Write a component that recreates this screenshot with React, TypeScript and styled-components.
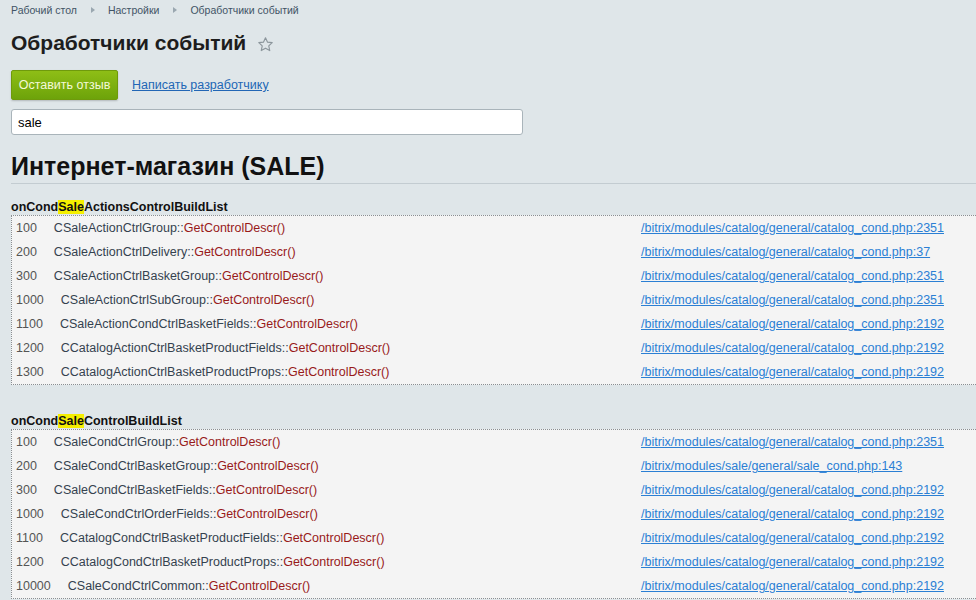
import React from 'react'
import styled, { createGlobalStyle } from 'styled-components'

const GlobalStyle = createGlobalStyle`
  html, body {
    margin: 0;
    padding: 0;
  }
  body {
    background: #dfe6e9;
    font-family: 'Liberation Sans', Arial, sans-serif;
    overflow: hidden;
  }
`

const Page = styled.div`
  padding: 2px 0 0 11px;
  width: 976px;
  box-sizing: border-box;
`

const Breadcrumbs = styled.div`
  display: flex;
  align-items: center;
  height: 16px;
  font-size: 10.5px;
  color: #3f5466;
`

const Crumb = styled.span``

const CrumbArrow = styled.span`
  width: 0;
  height: 0;
  border-top: 3px solid transparent;
  border-bottom: 3px solid transparent;
  border-left: 4px solid #9aa7b0;
  margin: 0 13px 0 14px;
`

const TitleRow = styled.div`
  display: flex;
  align-items: center;
  margin-top: 11px;
  height: 28px;
`

const Title = styled.h1`
  margin: 0;
  font-size: 21px;
  font-weight: bold;
  color: #1d1d1d;
`

const Star = styled.svg`
  margin-left: 11px;
  margin-top: 2px;
`

const Actions = styled.div`
  display: flex;
  align-items: center;
  margin-top: 13px;
  gap: 14px;
`

const Button = styled.button`
  height: 30px;
  width: 107px;
  padding: 0;
  border: 1px solid #6f9a0c;
  border-radius: 2px;
  background: linear-gradient(#8ebe16, #6da30a);
  color: #f4f9d8;
  font-family: inherit;
  font-size: 12.5px;
  box-shadow: 0 1px 2px rgba(0, 0, 0, 0.2);
`

const DevLink = styled.a`
  font-size: 12.5px;
  color: #2266b5;
  text-decoration: underline;
`

const Search = styled.input`
  display: block;
  margin-top: 9px;
  width: 512px;
  height: 26px;
  box-sizing: border-box;
  border: 1px solid #a9b4ba;
  border-radius: 3px;
  background: #fff;
  padding: 0 6px;
  font-family: inherit;
  font-size: 13px;
  color: #000;
  outline: none;
`

const ModuleTitle = styled.h2`
  margin: 14px 0 0 0;
  font-size: 25px;
  font-weight: bold;
  color: #111;
  height: 34px;
  line-height: 34px;
  border-bottom: 1px solid #c3ccd1;
`

const Group = styled.section<{ $first?: boolean }>`
  margin-top: ${p => (p.$first ? '15px' : '28px')};
`

const EventName = styled.div`
  font-size: 12.5px;
  font-weight: bold;
  color: #111;
  height: 16px;
  line-height: 16px;
`

const Mark = styled.span`
  background: #f5ef00;
`

const Table = styled.div`
  border-top: 1px dotted #8a8f93;
  border-left: 1px dotted #8a8f93;
  border-bottom: 1px dotted #8a8f93;
  background: #f4f4f4;
`

const Row = styled.div`
  display: grid;
  grid-template-columns: 629px 1fr;
  height: 24px;
  align-items: center;
  font-size: 12.5px;
`

const HandlerCell = styled.div`
  display: flex;
  gap: 17px;
  padding-left: 4px;
`

const Sort = styled.span`
  color: #555;
`

const ClassName = styled.span`
  color: #34424f;
`

const Method = styled.span`
  color: #981a1a;
`

const FileLink = styled.a`
  color: #2b7fd4;
  text-decoration: underline;
`

type Handler = { sort: string; cls: string; file: string }

const actions: Handler[] = [
  { sort: '100', cls: 'CSaleActionCtrlGroup', file: '/bitrix/modules/catalog/general/catalog_cond.php:2351' },
  { sort: '200', cls: 'CSaleActionCtrlDelivery', file: '/bitrix/modules/catalog/general/catalog_cond.php:37' },
  { sort: '300', cls: 'CSaleActionCtrlBasketGroup', file: '/bitrix/modules/catalog/general/catalog_cond.php:2351' },
  { sort: '1000', cls: 'CSaleActionCtrlSubGroup', file: '/bitrix/modules/catalog/general/catalog_cond.php:2351' },
  { sort: '1100', cls: 'CSaleActionCondCtrlBasketFields', file: '/bitrix/modules/catalog/general/catalog_cond.php:2192' },
  { sort: '1200', cls: 'CCatalogActionCtrlBasketProductFields', file: '/bitrix/modules/catalog/general/catalog_cond.php:2192' },
  { sort: '1300', cls: 'CCatalogActionCtrlBasketProductProps', file: '/bitrix/modules/catalog/general/catalog_cond.php:2192' },
]

const conditions: Handler[] = [
  { sort: '100', cls: 'CSaleCondCtrlGroup', file: '/bitrix/modules/catalog/general/catalog_cond.php:2351' },
  { sort: '200', cls: 'CSaleCondCtrlBasketGroup', file: '/bitrix/modules/sale/general/sale_cond.php:143' },
  { sort: '300', cls: 'CSaleCondCtrlBasketFields', file: '/bitrix/modules/catalog/general/catalog_cond.php:2192' },
  { sort: '1000', cls: 'CSaleCondCtrlOrderFields', file: '/bitrix/modules/catalog/general/catalog_cond.php:2192' },
  { sort: '1100', cls: 'CCatalogCondCtrlBasketProductFields', file: '/bitrix/modules/catalog/general/catalog_cond.php:2192' },
  { sort: '1200', cls: 'CCatalogCondCtrlBasketProductProps', file: '/bitrix/modules/catalog/general/catalog_cond.php:2192' },
  { sort: '10000', cls: 'CSaleCondCtrlCommon', file: '/bitrix/modules/catalog/general/catalog_cond.php:2192' },
]

const HandlerTable: React.FC<{ items: Handler[] }> = ({ items }) => (
  <Table>
    {items.map((h, i) => (
      <Row key={i}>
        <HandlerCell>
          <Sort>{h.sort}</Sort>
          <span>
            <ClassName>{h.cls}::</ClassName>
            <Method>GetControlDescr()</Method>
          </span>
        </HandlerCell>
        <FileLink href="#">{h.file}</FileLink>
      </Row>
    ))}
  </Table>
)

export default function App() {
  return (
    <Page>
      <GlobalStyle />
      <Breadcrumbs>
        <Crumb>Рабочий стол</Crumb>
        <CrumbArrow />
        <Crumb>Настройки</Crumb>
        <CrumbArrow />
        <Crumb>Обработчики событий</Crumb>
      </Breadcrumbs>
      <TitleRow>
        <Title>Обработчики событий</Title>
        <Star width="17" height="17" viewBox="0 0 24 24">
          <path
            d="M12 2.5l2.9 6.2 6.6.7-4.9 4.6 1.4 6.6L12 17.2l-6 3.4 1.4-6.6-4.9-4.6 6.6-.7z"
            fill="none"
            stroke="#8c969c"
            strokeWidth="1.6"
            strokeLinejoin="round"
          />
        </Star>
      </TitleRow>
      <Actions>
        <Button>Оставить отзыв</Button>
        <DevLink href="#">Написать разработчику</DevLink>
      </Actions>
      <Search defaultValue="sale" />
      <ModuleTitle>Интернет-магазин (SALE)</ModuleTitle>
      <Group $first>
        <EventName>
          onCond<Mark>Sale</Mark>ActionsControlBuildList
        </EventName>
        <HandlerTable items={actions} />
      </Group>
      <Group>
        <EventName>
          onCond<Mark>Sale</Mark>ControlBuildList
        </EventName>
        <HandlerTable items={conditions} />
      </Group>
    </Page>
  )
}
